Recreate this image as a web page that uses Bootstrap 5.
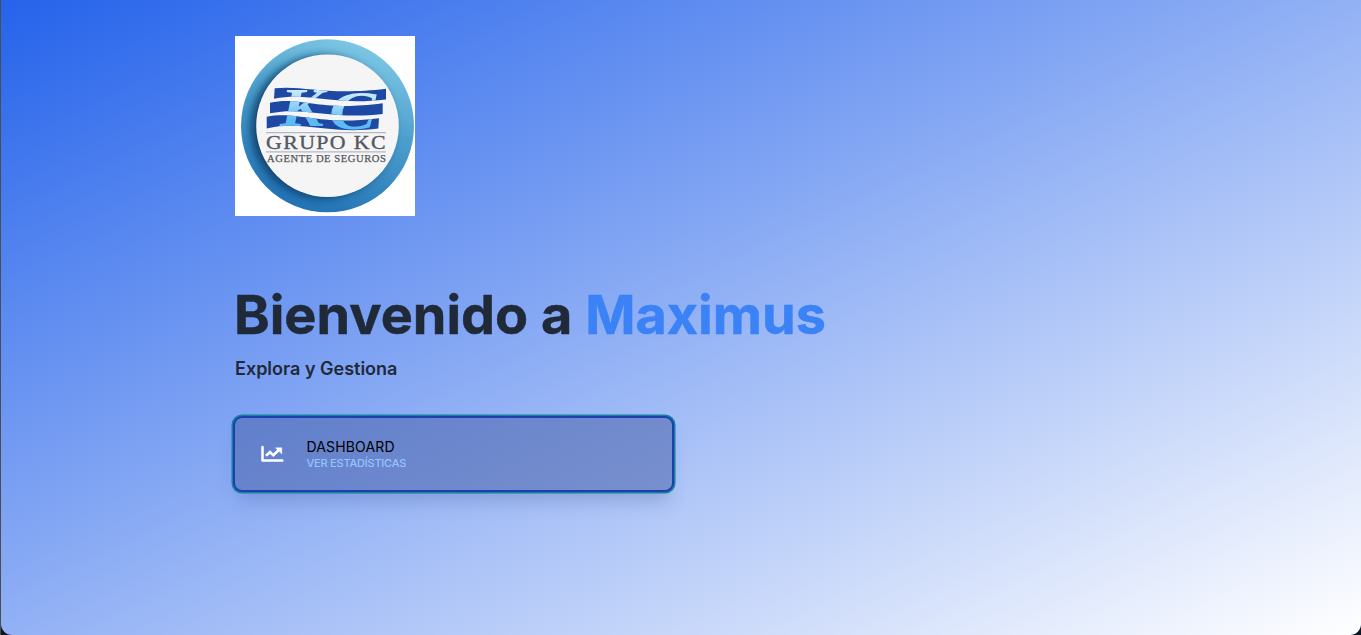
<!DOCTYPE html>
<html lang="es">
<head>
<meta charset="utf-8">
<meta name="viewport" content="width=device-width, initial-scale=1">
<title>Maximus</title>
<link rel="stylesheet" href="https://cdn.jsdelivr.net/npm/bootstrap@5.3.0/dist/css/bootstrap.min.css">
<style>
  body { font-family: Inter, "Liberation Sans", sans-serif; background: linear-gradient(to right, #4a4d52 1px, #0a1624 1px); }
  .welcome { height: 635px; margin-left: 1px; padding: 36px 0 0 234px; border-radius: 0 0 11px 11px; background: linear-gradient(to bottom right, #2563eb, #fff); }
  .logo { width: 180px; height: 180px; }
  .title { margin-top: 71px; margin-left: -1px; font-size: 54px; line-height: 56px; font-weight: 700; color: #1f2937; -webkit-text-stroke: .5px currentColor; }
  .title span { color: #3b82f6; }
  .subtitle { margin-top: 12px; font-size: 18px; line-height: 28px; font-weight: 600; color: #1f2937; }
  .tile { width: 437px; height: 72px; margin-top: 35px; padding: 0 26px; border-radius: 7px; background: rgba(66,90,164,.5); color: #000;
    box-shadow: 0 0 0 2px #1e40af, 0 0 0 3.500px #14829f, 0 14px 18px -3px rgba(70,90,150,.28); }
  .tile-text { margin-left: 22.500px; }
  .tile-name { font-size: 14px; line-height: 18px; letter-spacing: .15px; }
  .tile-note { font-size: 11px; line-height: 14px; font-weight: 500; letter-spacing: -.22px; color: #93c5fd; }
</style>
</head>
<body class="overflow-hidden">
<main class="welcome d-flex flex-column align-items-start">
  <svg class="logo d-block flex-shrink-0" viewBox="0 0 180 180" role="img" aria-label="Grupo KC">
    <defs>
      <linearGradient id="ring" x1=".75" y1="0" x2=".4" y2="1"><stop offset="0" stop-color="#82cbe6"/><stop offset=".45" stop-color="#4c9fcd"/><stop offset="1" stop-color="#2272b5"/></linearGradient>
      <linearGradient id="letter" x1="0" y1="0" x2="0" y2="1"><stop offset="0.200" stop-color="#cdebfc"/><stop offset=".7" stop-color="#5dbbf3"/></linearGradient>
      <filter id="soft" x="-20%" y="-20%" width="140%" height="140%"><feGaussianBlur stdDeviation="4"/></filter>
      <clipPath id="disc"><circle cx="92.500" cy="89.800" r="86.500"/></clipPath>
      <clipPath id="flag"><path id="stripes" d="M39.700 52.300C68 49 92 60 151 52.800V63.500C98 70 76 56 39 62.700ZM35 66.700C66 60 84 76 147.700 67.300V78C96 84 70 70 35 77.300ZM31.700 80.700C64 75 82 90 144 82.300L143.300 92.500C96 99 68 84 31.700 92.500Z"/></clipPath>
    </defs>
    <path fill="#fff" d="M0 0H180V180H0Z"/>
    <circle cx="92.500" cy="89.800" r="86.500" fill="url(#ring)"/>
    <g clip-path="url(#disc)"><circle cx="87" cy="91" r="71" fill="#073c68" opacity=".95" filter="url(#soft)"/></g>
    <circle cx="92.500" cy="89.700" r="71.300" fill="#f5f5f6"/>
    <use href="#stripes" fill="#1d49a4"/>
    <g clip-path="url(#flag)" fill="url(#letter)" font-family="Liberation Serif, serif" font-size="54" font-weight="700" font-style="italic">
      <text x="45" y="89.500" textLength="44" lengthAdjust="spacingAndGlyphs">K</text>
      <text x="94" y="93" textLength="47" lengthAdjust="spacingAndGlyphs">C</text>
    </g>
    <path d="M31 96.700H151M31 115.900H151" stroke="#8d96ad" stroke-width=".8"/>
    <g fill="#55585f" font-family="Liberation Serif, serif">
      <text x="31" y="113.300" font-size="18.500" letter-spacing="1.200" textLength="121" lengthAdjust="spacingAndGlyphs" stroke="#55585f" stroke-width=".35">GRUPO KC</text>
      <text x="32" y="126.300" font-size="9.500" letter-spacing=".5" textLength="119.500" lengthAdjust="spacingAndGlyphs" stroke="#55585f" stroke-width=".25">AGENTE DE SEGUROS</text>
    </g>
  </svg>
  <h1 class="title mb-0 text-nowrap">Bienvenido a <span>Maximus</span></h1>
  <p class="subtitle mb-0">Explora y Gestiona</p>
  <a class="tile d-flex align-items-center text-decoration-none" href="#">
    <svg width="23" height="18" viewBox="0 0 23 18" fill="none" stroke="#fff" aria-hidden="true">
      <path d="M1.500 2V15.500H21.300" stroke-width="2.500" stroke-linecap="round" stroke-linejoin="round"/>
      <path d="M5 10.800 9 7 12.300 10.300 17.800 5" stroke-width="2.600"/>
      <path d="M14.500 2.800H20.800V9.100Z" fill="#fff" stroke="#fff" stroke-width=".4" stroke-linejoin="round"/>
    </svg>
    <span class="tile-text d-flex flex-column">
      <span class="tile-name">DASHBOARD</span>
      <span class="tile-note">VER ESTADÍSTICAS</span>
    </span>
  </a>
</main>
<script src="https://cdn.jsdelivr.net/npm/bootstrap@5.3.0/dist/js/bootstrap.bundle.min.js"></script>
</body>
</html>
